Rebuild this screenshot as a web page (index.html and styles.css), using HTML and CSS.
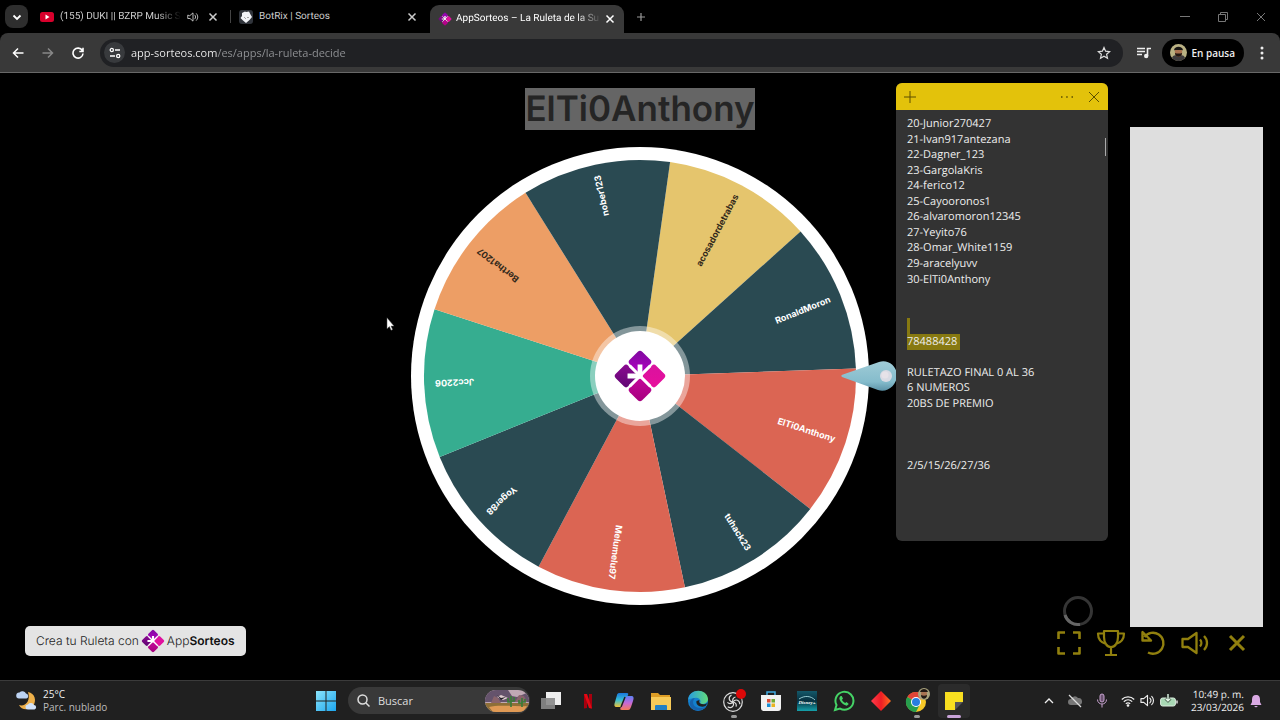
FILE: index.html
```html
<!DOCTYPE html>
<html lang="es">
<head>
<meta charset="utf-8">
<meta name="viewport" content="width=device-width, initial-scale=1">
<title>AppSorteos – La Ruleta de la Suerte</title>
<link rel="stylesheet" href="styles.css">
</head>
<body>
<svg class="defs" aria-hidden="true">
  <defs>
    <linearGradient id="gTop" x1="0" y1="0" x2="1" y2="1"><stop offset="0" stop-color="#7d0a9e"/><stop offset="1" stop-color="#b400c4"/></linearGradient>
    <linearGradient id="gRight" x1="0" y1="0" x2="1" y2="1"><stop offset="0" stop-color="#d9129f"/><stop offset="1" stop-color="#e80f9c"/></linearGradient>
    <linearGradient id="gBottom" x1="0" y1="0" x2="1" y2="1"><stop offset="0" stop-color="#c4089b"/><stop offset="1" stop-color="#a5007c"/></linearGradient>
    <linearGradient id="gLeft" x1="0" y1="0" x2="1" y2="1"><stop offset="0" stop-color="#8c0a92"/><stop offset="1" stop-color="#5f0672"/></linearGradient>
    <symbol id="logo" viewBox="0 0 52 52">
      <g transform="rotate(45 26 26)">
        <rect x="8" y="8" width="17" height="17" rx="3" fill="url(#gTop)"/>
        <rect x="27" y="8" width="17" height="17" rx="3" fill="url(#gRight)"/>
        <rect x="27" y="27" width="17" height="17" rx="3" fill="url(#gBottom)"/>
        <rect x="8" y="27" width="17" height="17" rx="3" fill="url(#gLeft)"/>
      </g>
      <path d="M26 26l-10-10M26 26l10-10M26 26l-10 10M26 26l10 10" stroke="#fff" stroke-width="2.800" fill="none"/>
      <path d="M26 28V15M28 26H14" stroke="#fff" stroke-width="4.600" fill="none"/>
    </symbol>
    <symbol id="close" viewBox="0 0 10 10"><path d="M1.500 1.500l7 7M8.500 1.500l-7 7" fill="none" stroke="currentColor" stroke-width="1.500"/></symbol>
    <symbol id="sound" viewBox="0 0 16 16"><path d="M1 6v4h3l4 3.500V2.500L4 6zM10.500 5.500c1.400 1.400 1.400 3.600 0 5M12.500 3.500c2.500 2.500 2.500 6.500 0 9" fill="none" stroke="currentColor" stroke-width="1.200" stroke-linejoin="round" stroke-linecap="round"/></symbol>
  </defs>
</svg>

<header class="tabs">
  <button class="tabs-menu" aria-label="Buscar pestañas"><svg width="12" height="12" viewBox="0 0 12 12"><path d="M2.500 4.500L6 8l3.500-3.500" fill="none" stroke="#fff" stroke-width="1.800"/></svg></button>
  <div class="tab">
    <svg width="14" height="14" viewBox="0 0 14 14"><rect y="2" width="14" height="10" rx="2.500" fill="#d8002c"/><path d="M5.500 4.500v5L9.500 7z" fill="#fff"/></svg>
    <span class="tab-title fade">(155) DUKI || BZRP Music Se</span>
    <button class="plain" aria-label="Silenciar pestaña"><svg width="12" height="12"><use href="#sound"/></svg></button>
    <button class="plain" aria-label="Cerrar pestaña"><svg width="10" height="10"><use href="#close"/></svg></button>
  </div>
  <div class="tab tab-divided">
    <svg width="14" height="14" viewBox="0 0 14 14"><rect width="14" height="14" rx="3" fill="#30343b"/><path d="M3 3l3-1.500L7 2l3-.5 1.500 3L13 7l-2.500 3L7 13l-3-2.500L1.500 8 3 6z" fill="#f2f4f8"/><path d="M5.500 7.500l1 1M8.500 7.500h1" stroke="#555" stroke-width="1"/></svg>
    <span class="tab-title">BotRix | Sorteos</span>
    <button class="plain" aria-label="Cerrar pestaña"><svg width="10" height="10"><use href="#close"/></svg></button>
  </div>
  <div class="tab tab-active">
    <svg width="14" height="14"><use href="#logo"/></svg>
    <span class="tab-title fade">AppSorteos – La Ruleta de la Su</span>
    <button class="plain" aria-label="Cerrar pestaña"><svg width="10" height="10"><use href="#close"/></svg></button>
  </div>
  <button class="plain tab-new" aria-label="Nueva pestaña"><svg width="10" height="10" viewBox="0 0 10 10"><path d="M5 1v8M1 5h8" stroke="#999" stroke-width="1.200"/></svg></button>
  <div class="window-buttons">
    <button class="plain" aria-label="Minimizar"><svg width="10" height="10" viewBox="0 0 10 10"><path d="M0 4.500h10" stroke="#777"/></svg></button>
    <button class="plain" aria-label="Restaurar"><svg width="10" height="10" viewBox="0 0 10 10"><path d="M.5 2.500h7v7h-7zM2.500 2V.5h7v7H8" fill="none" stroke="#777"/></svg></button>
    <button class="plain" aria-label="Cerrar"><svg width="10" height="10" viewBox="0 0 10 10"><path d="M1 1l8 8M9 1L1 9" stroke="#777"/></svg></button>
  </div>
</header>

<nav class="toolbar">
  <div class="nav-buttons">
    <button class="plain" aria-label="Atrás"><svg width="12" height="12" viewBox="0 0 12 12"><path d="M11.500 6H1.500M6 1.500L1.500 6 6 10.500" fill="none" stroke="#fff" stroke-width="1.500"/></svg></button>
    <button class="plain" aria-label="Adelante"><svg width="12" height="12" viewBox="0 0 12 12"><path d="M.5 6h10M6 1.500L10.500 6 6 10.500" fill="none" stroke="#888" stroke-width="1.500"/></svg></button>
    <button class="plain" aria-label="Recargar"><svg width="12" height="12" viewBox="0 0 12 12"><path d="M10.300 3.500A5 5 0 1 0 11 6.500M11 .8v3.700H7.300" fill="none" stroke="#fff" stroke-width="1.600"/></svg></button>
  </div>
  <div class="address">
    <button class="site-info" aria-label="Información del sitio"><svg width="12" height="12" viewBox="0 0 12 12"><g fill="none" stroke="#fff" stroke-width="1.300"><circle cx="2.800" cy="3" r="1.600"/><path d="M6 3h5M1 9h5"/><circle cx="9.200" cy="9" r="1.600"/></g></svg></button>
    <input class="url" type="text" aria-label="Dirección" value="app-sorteos.com/es/apps/la-ruleta-decide">
    <button class="plain" aria-label="Añadir a favoritos"><svg width="14" height="14" viewBox="0 0 14 14"><path d="M7 1.500l1.600 3.700 4 .4-3 2.700.9 4L7 10.200l-3.500 2.100.9-4-3-2.700 4-.4z" fill="none" stroke="#ddd" stroke-width="1.200"/></svg></button>
  </div>
  <button class="plain media" aria-label="Controles multimedia"><svg width="14" height="12" viewBox="0 0 14 12"><path d="M0 1.500h8M0 4.500h8M0 7.500h5M10.500 9V1.500H14" fill="none" stroke="#eee" stroke-width="1.600"/><circle cx="9.200" cy="9" r="2.200" fill="#eee"/></svg></button>
  <button class="profile">
    <svg width="17" height="17" viewBox="0 0 17 17"><circle cx="8.500" cy="8.500" r="8.500" fill="#b9b183"/><path d="M2 14c1-3 3-3 6.500-3s5.500 0 6.500 3a8.500 8.500 0 0 1-13 0z" fill="#3d3a3c"/><ellipse cx="8.500" cy="8" rx="3.700" ry="5" fill="#a9714f"/><path d="M4 6.500C4 1.500 13 1.500 13 6.500L12 6H5z" fill="#171412"/><path d="M5 9c2 .8 5 .8 7 0 0 5-7 5-7 0z" fill="#211713"/></svg>
    En pausa
  </button>
  <button class="plain more" aria-label="Menú"><svg width="4" height="14" viewBox="0 0 4 14"><g fill="#eee"><circle cx="2" cy="2" r="1.500"/><circle cx="2" cy="7" r="1.500"/><circle cx="2" cy="12" r="1.500"/></g></svg></button>
</nav>

<main class="stage">
  <h1 class="winner"><mark>ElTi0Anthony</mark></h1>
  <div class="wheel-box">
    <svg class="wheel" viewBox="-229 -229 458 458" role="img" aria-label="Ruleta">
      <circle r="229" fill="#fff"/>
      <g>
        <path d="M0 0L-73.900-203A216 216 0 0 1 73.900-203Z" fill="#e5c56d" transform="rotate(28)"/>
        <path d="M0 0L-73.900-203A216 216 0 0 1 73.900-203Z" fill="#2a4a52" transform="rotate(68)"/>
        <path d="M0 0L-73.900-203A216 216 0 0 1 73.900-203Z" fill="#db6553" transform="rotate(108)"/>
        <path d="M0 0L-73.900-203A216 216 0 0 1 73.900-203Z" fill="#2a4a52" transform="rotate(148)"/>
        <path d="M0 0L-73.900-203A216 216 0 0 1 73.900-203Z" fill="#db6553" transform="rotate(188)"/>
        <path d="M0 0L-73.900-203A216 216 0 0 1 73.900-203Z" fill="#2a4a52" transform="rotate(228)"/>
        <path d="M0 0L-73.900-203A216 216 0 0 1 73.900-203Z" fill="#36ad90" transform="rotate(268)"/>
        <path d="M0 0L-73.900-203A216 216 0 0 1 73.900-203Z" fill="#ed9e65" transform="rotate(308)"/>
        <path d="M0 0L-73.900-203A216 216 0 0 1 73.900-203Z" fill="#2a4a52" transform="rotate(348)"/>
      </g>
      <g class="names">
        <text class="dark" x="205" y="3" transform="rotate(-62)">acosadordetrabas</text>
        <text x="205" y="3" transform="rotate(-22)">RonaldMoron</text>
        <text x="205" y="3" transform="rotate(18)">ElTi0Anthony</text>
        <text x="205" y="3" transform="rotate(58)">tuhack23</text>
        <text x="205" y="3" transform="rotate(98)">Melumelu97</text>
        <text x="205" y="3" transform="rotate(138)">Yoger88</text>
        <text x="205" y="3" transform="rotate(178)">Jcc2206</text>
        <text class="dark" x="205" y="3" transform="rotate(218)">Bertha1207</text>
        <text x="205" y="3" transform="rotate(258)">nober123</text>
      </g>
      <circle r="50" fill="#fff" fill-opacity=".42"/>
      <circle r="45" fill="#fff"/>
      <use href="#logo" x="-27" y="-27" width="54" height="54"/>
    </svg>
    <svg class="pointer" width="60" height="34" viewBox="0 0 60 34">
      <defs><linearGradient id="gPin" x1="0" y1="0" x2="0" y2="1"><stop offset="0" stop-color="#9fcbd6"/><stop offset=".7" stop-color="#85bccc"/><stop offset="1" stop-color="#5c93a8"/></linearGradient></defs>
      <path d="M1 18c-1-1-1-2 1-2.500L38 3c8-3 17 3 18 12 0 12-10 19-19 16z" fill="url(#gPin)"/>
      <circle cx="45" cy="17" r="6" fill="#d9dbe4"/><circle cx="44" cy="16" r="3.500" fill="#e6e2e8"/>
    </svg>
  </div>

  <a class="brand" href="#">Crea tu Ruleta con <svg width="24" height="24"><use href="#logo"/></svg><span>App<b>Sorteos</b></span></a>

  <div class="panel"></div>
  <svg class="spinner" width="32" height="32" viewBox="0 0 32 32"><circle cx="16" cy="16" r="13.500" fill="none" stroke="#353535" stroke-width="3"/><path d="M3 20a13.500 13.500 0 0 0 15 9.400" fill="none" stroke="#666" stroke-width="3"/></svg>
  <div class="controls">
    <button aria-label="Pantalla completa"><svg width="24" height="24" viewBox="0 0 24 24"><path d="M1.500 8V1.500H8M16 1.500h6.500V8M22.500 16v6.500H16M8 22.500H1.500V16" stroke-width="2.600"/></svg></button>
    <button aria-label="Ganadores"><svg width="30" height="28" viewBox="0 0 30 28"><path d="M8 2h14v6c0 6-3 10-7 10S8 14 8 8zM8 4.500H2c0 6 3 9 8 10.500M22 4.500h6c0 6-3 9-8 10.500M15 18v7M9 26h12" stroke-width="2.200"/></svg></button>
    <button aria-label="Reiniciar"><svg width="26" height="26" viewBox="0 0 26 26"><path d="M4.500 7A10.500 10.500 0 1 1 8 22.500M2.500 2v8.500H11L2.500 2z" stroke-width="2.400"/></svg></button>
    <button aria-label="Sonido"><svg width="28" height="24" viewBox="0 0 28 24"><path d="M1.500 8v8H7l8.500 6V2L7 8zM19 8.500c1.800 2 1.800 5 0 7M23 5c4 4 4 10 0 14" stroke-width="2.300"/></svg></button>
    <button aria-label="Cerrar"><svg width="18" height="18" viewBox="0 0 18 18"><path d="M2 2l14 14M16 2L2 16" stroke-width="3"/></svg></button>
  </div>

  <svg class="cursor" width="9" height="14" viewBox="0 0 9 14"><path d="M1 .8v11l2.400-2.200 1.700 3.700 1.500-.7-1.600-3.500h3z" fill="#fff" stroke="#555" stroke-width=".5"/></svg>
</main>

<section class="note" aria-label="Nota rápida">
  <header class="note-bar">
    <button class="plain" aria-label="Nueva nota"><svg width="12" height="12" viewBox="0 0 12 12"><path d="M6 0v12M0 6h12" stroke="#5c4f00"/></svg></button>
    <button class="plain note-more" aria-label="Opciones"><svg width="14" height="4" viewBox="0 0 14 4"><path d="M1 2h1.500M6.200 2h1.500M11.500 2H13" stroke="#5c4f00" stroke-width="1.500"/></svg></button>
    <button class="plain" aria-label="Cerrar nota"><svg width="12" height="12" viewBox="0 0 12 12"><path d="M1 1l10 10M11 1L1 11" stroke="#5c4f00"/></svg></button>
  </header>
  <div class="note-body">
    <p>20-Junior270427</p>
    <p>21-Ivan917antezana</p>
    <p>22-Dagner_123</p>
    <p>23-GargolaKris</p>
    <p>24-ferico12</p>
    <p>25-Cayooronos1</p>
    <p>26-alvaromoron12345</p>
    <p>27-Yeyito76</p>
    <p>28-Omar_White1159</p>
    <p>29-aracelyuvv</p>
    <p>30-ElTi0Anthony</p>
    <p></p>
    <p></p>
    <p><mark>&nbsp;</mark></p>
    <p><mark>78488428&nbsp;</mark></p>
    <p></p>
    <p>RULETAZO FINAL 0 AL 36</p>
    <p>6 NUMEROS</p>
    <p>20BS DE PREMIO</p>
    <p></p>
    <p></p>
    <p></p>
    <p>2/5/15/26/27/36</p>
    <p></p>
    <p></p>
    <p></p>
    <p></p>
  </div>
  <i class="note-scroll"></i>
</section>

<footer class="taskbar">
  <button class="weather">
    <svg width="22" height="22" viewBox="0 0 22 22"><path d="M12 2c7 1 9 9 5 14S5 20 3 15c6 2 12-4 9-13z" fill="#eeb04a"/><path d="M3 8.500a3 3 0 0 1 .5-6 4 4 0 0 1 6.500 1 2.600 2.600 0 0 1 .5 5z" fill="#bcd2f2"/><path d="M12 19.500a2.500 2.500 0 0 1 0-5 3.500 3.500 0 0 1 6 .5 2.300 2.300 0 0 1 .5 4.500z" fill="#d2e2f8"/></svg>
    <span>25°C<small>Parc. nublado</small></span>
  </button>
  <div class="dock">
    <button class="plain" aria-label="Inicio"><svg width="20" height="20" viewBox="0 0 20 20"><defs><linearGradient id="gWin" x1="0" y1="0" x2="1" y2="1"><stop offset="0" stop-color="#8be4fb"/><stop offset="1" stop-color="#1ba5ee"/></linearGradient></defs><path d="M0 0h9.500v9.500H0zM10.500 0H20v9.500h-9.500zM0 10.500h9.500V20H0zM10.500 10.500H20V20h-9.500z" fill="url(#gWin)"/></svg></button>
    <label class="search">
      <svg width="13" height="13" viewBox="0 0 13 13"><circle cx="5.500" cy="5.500" r="4.500" fill="none" stroke="#ddd" stroke-width="1.500"/><path d="M9 9l3.500 3.500" stroke="#ddd" stroke-width="1.500"/></svg>
      <input type="search" placeholder="Buscar" aria-label="Buscar">
      <svg width="44" height="22" viewBox="0 0 44 22"><defs><clipPath id="scene"><rect width="44" height="22" rx="11"/></clipPath></defs><g clip-path="url(#scene)"><path d="M0 0h44v22H0z" fill="#c0a8b4"/><path d="M0 3l9-3h14l4 6 5 1 12-5v10H0z" fill="#65536c"/><path d="M12 7l4-2 7 3-5 2z" fill="#e0cdd0"/><path d="M6 13l3-7 4 2 3 5zM30 12l4-7 5 1 3 6z" fill="#89636b"/><path d="M0 13h44v9H0z" fill="#8e6f38"/><path d="M4 17c10-3 26 0 38-1l-4 6H8z" fill="#e09a55"/><path d="M26 17V6M23 8v4h3M29 7v4h-3M37 17V8M34 10v3h3M40 9v3h-3" stroke="#3c7a38" stroke-width="1.700" fill="none"/><path d="M12 5l4 3 5-1-5 3z" fill="#25202a"/></g></svg>
    </label>
    <div class="apps">
      <button aria-label="Vista de tareas"><svg width="20" height="20" viewBox="0 0 20 20"><path d="M5 1h15v13H5z" fill="#eee"/><path d="M0 7h14v11H0z" fill="#888" fill-opacity=".9"/></svg></button>
      <button aria-label="Netflix"><svg width="20" height="20" viewBox="0 0 20 20"><path d="M6 3h3v14l-3 .5zM11 3h3v14.500l-3-.5z" fill="#a8000e"/><path d="M6 3h3l5 14.500-3-.5z" fill="#e30914"/></svg></button>
      <button aria-label="Copilot"><svg width="20" height="20" viewBox="0 0 20 20"><defs><linearGradient id="gCoA" x1="0" y1="0" x2="0" y2="1"><stop offset="0" stop-color="#1977dd"/><stop offset=".5" stop-color="#36bfd5"/><stop offset="1" stop-color="#f0c336"/></linearGradient><linearGradient id="gCoB" x1="0" y1="0" x2="0" y2="1"><stop offset="0" stop-color="#5b81f4"/><stop offset=".5" stop-color="#c669d8"/><stop offset="1" stop-color="#f77b58"/></linearGradient></defs><path d="M5 2h8c1.500 0 1.500 1 1 2l-4 10c-1 2-2 2-4 2H3c-3 0-3-2-2-5l2-7c0-1 1-2 2-2z" fill="url(#gCoA)"/><path d="M14 5h3c3 0 3 2 2 5l-2 6c-1 2-1 3-3 3H8c-2 0-2-1-1.500-2L11 7c.8-1.500 1.500-2 3-2z" fill="url(#gCoB)"/><path d="M11 6L7 16" stroke="#202020" stroke-width="1.500"/></svg></button>
      <button aria-label="Explorador"><svg width="22" height="20" viewBox="0 0 22 20"><path d="M1 2h7l2 2h10v5H1z" fill="#dd9d25"/><path d="M1 6h20v13H1z" fill="#f7ca58"/><path d="M5 19v-4q0-1 1-1h10q1 0 1 1v4z" fill="#2380c4"/></svg></button>
      <button aria-label="Edge"><svg width="22" height="22" viewBox="0 0 22 22"><defs><linearGradient id="gEd" x1="0" y1="0" x2="1" y2="0"><stop offset="0" stop-color="#269be1"/><stop offset="1" stop-color="#62dc7c"/></linearGradient></defs><circle cx="11" cy="11" r="10" fill="#1380ce"/><path d="M1 10C2-2 20-2 21 9c0 5-7 6-8 4 2-3-2-6-5-5-4 0-6 1-7 2z" fill="url(#gEd)"/><path d="M8 8c-5 5 0 13 11 9-4 5-14 5-16-2-1-4 2-7 5-7z" fill="#1662ad"/><path d="M12.500 10c-1 2 0 5 6 4l2-1-2 3c-5 2-10-1-9-5z" fill="#202020"/></svg></button>
      <button class="open" aria-label="OBS"><svg width="24" height="24" viewBox="0 0 24 24"><circle cx="11" cy="13" r="9.300" fill="#222" stroke="#ddd" stroke-width="1.200"/><g fill="none" stroke="#ddd" stroke-width="1.200"><path id="blade" d="M11 13c-4.500-.5-5-5-1.500-7M11 13c-1-3 .5-4.500 2.500-5"/><use href="#blade" transform="rotate(120 11 13)"/><use href="#blade" transform="rotate(240 11 13)"/></g><circle cx="19" cy="5" r="5" fill="#dc0808"/></svg></button>
      <button aria-label="Microsoft Store"><svg width="20" height="20" viewBox="0 0 20 20"><path d="M6 5V1h8v4" fill="none" stroke="#3fa9df" stroke-width="1.500"/><path d="M0 4h20v13q0 3-3 3H3q-3 0-3-3z" fill="#f2f2f2"/><path d="M6 8h3.500v3.500H6z" fill="#dd4b34"/><path d="M10.500 8H14v3.500h-3.500z" fill="#6eaa34"/><path d="M6 12.500h3.500V16H6z" fill="#198fd4"/><path d="M10.500 12.500H14V16h-3.500z" fill="#eab421"/></svg></button>
      <button aria-label="Disney+"><svg width="20" height="20" viewBox="0 0 20 20"><defs><linearGradient id="gDis" x1="0" y1="0" x2="0" y2="1"><stop offset="0" stop-color="#14596a"/><stop offset=".5" stop-color="#07303f"/><stop offset="1" stop-color="#15a1ab"/></linearGradient></defs><path d="M0 0h20v20H0z" fill="url(#gDis)"/><path d="M2 8c6-4 12-3 16 1" fill="none" stroke="#b8ebf0" stroke-width=".8"/><text class="disney" x="10" y="13">Disney+</text></svg></button>
      <button aria-label="WhatsApp"><svg width="22" height="22" viewBox="0 0 22 22"><path d="M2 20l1.500-5A9 9 0 1 1 7 18.600z" fill="#202020" stroke="#45d366" stroke-width="2"/><path d="M7.500 6L6.300 8c.5 4 4 7 7.500 7.700l2-1.700-2.300-2-1.300 1C10.500 12 9.500 11 9 9.700l1-1.200L8.700 6z" fill="#45d366"/></svg></button>
      <button aria-label="AnyDesk"><svg width="20" height="20" viewBox="0 0 20 20"><defs><linearGradient id="gDia"><stop offset="0" stop-color="#ff3d4d"/><stop offset=".5" stop-color="#ed1c24"/><stop offset="1" stop-color="#ff7020"/></linearGradient></defs><path d="M10 0l10 10-10 10L0 10z" fill="url(#gDia)"/></svg></button>
      <button class="open" aria-label="Chrome"><svg width="26" height="26" viewBox="0 0 26 26"><circle cx="12" cy="14" r="10" fill="#f7c928"/><path d="M12 14L3.300 9A10 10 0 0 1 20.700 9z" fill="#e04438"/><path d="M12 14L3.300 9A10 10 0 0 0 12 24l4-8z" fill="#269e4d"/><circle cx="12" cy="14" r="5" fill="#fff"/><circle cx="12" cy="14" r="4" fill="#287de0"/><circle cx="20" cy="6" r="6" fill="#aaa47e"/><ellipse cx="20" cy="6" rx="3" ry="4" fill="#a87352"/><path d="M16 4c1-4 7-4 8 0M17 7c2 1 4 1 6 0 0 5-6 5-6 0" fill="#211915"/></svg></button>
      <button class="open current" aria-label="Notas rápidas"><svg width="18" height="18" viewBox="0 0 18 18"><path d="M0 0h18v10h-8v8H0z" fill="#f9df20"/><path d="M10 18v-8h8z" fill="#56565a"/></svg></button>
    </div>
  </div>
  <div class="tray">
    <button class="plain" aria-label="Iconos ocultos"><svg width="10" height="8" viewBox="0 0 10 8"><path d="M1 6l4-4 4 4" fill="none" stroke="#eee" stroke-width="1.300"/></svg></button>
    <button class="plain" aria-label="OneDrive"><svg width="16" height="14" viewBox="0 0 16 14"><path d="M4 11a3 3 0 0 1 0-6 4 4 0 0 1 7-1 3.500 3.500 0 0 1 1 7z" fill="#777"/><path d="M2 1l12 12" stroke="#ddd" stroke-width="1.300"/></svg></button>
    <button class="plain" aria-label="Micrófono"><svg width="12" height="16" viewBox="0 0 12 16"><rect x="4" y="1" width="4" height="8" rx="2" fill="#6d5473" stroke="#c8a3d0"/><path d="M1.500 6.500c0 6 9 6 9 0M6 11v3.500" fill="none" stroke="#c8a3d0"/></svg></button>
    <button class="plain quick" aria-label="Red, sonido y batería">
      <svg width="14" height="14" viewBox="0 0 14 14"><path d="M.8 5.500c3.500-3.500 9-3.500 12.400 0M2.800 7.700c2.500-2.400 6-2.400 8.400 0M4.800 9.800c1.400-1.300 3-1.300 4.400 0" fill="none" stroke="#eee" stroke-width="1.200"/><circle cx="7" cy="11.500" r="1.300" fill="#eee"/></svg>
      <svg class="light" width="15" height="15"><use href="#sound"/></svg>
      <svg width="18" height="14" viewBox="0 0 18 14"><rect x=".6" y="4" width="14.800" height="8" rx="2" fill="#a8d8b4" stroke="#ddeee0"/><path d="M17 6.500v3" stroke="#ddd" stroke-width="1.500"/><path d="M8 0v6.500M5.500 4.500L8 7l2.500-2.500" fill="none" stroke="#1c3022" stroke-width="2.600"/><path d="M8 0v6.500M5.500 4.500L8 7l2.500-2.500" fill="none" stroke="#e4f6e8" stroke-width="1.400"/></svg>
    </button>
    <time class="clock" datetime="2026-03-23T22:49">10:49 p. m.<br>23/03/2026</time>
    <button class="plain" aria-label="Notificaciones"><svg width="12" height="14" viewBox="0 0 12 14"><path d="M6 1c-3 0-4 2-4 4.500V8L.5 11h11L10 8V5.500C10 3 9 1 6 1zM4 12h4l-2 1.500z" fill="#d9a9e3"/></svg></button>
  </div>
</footer>
</body>
</html>
```

FILE: styles.css
```css
* { box-sizing: border-box; }

body {
  margin: 0;
  min-height: 100vh;
  display: flex;
  flex-direction: column;
  position: relative;
  overflow: hidden;
  background: #000;
  color: #eee;
  font: 11px/16px "Open Sans", "Noto Sans", sans-serif;
  text-rendering: geometricPrecision;
}

button, input {
  margin: 0;
  padding: 0;
  border: 0;
  background: none;
  color: inherit;
  font: inherit;
}

button { display: flex; align-items: center; justify-content: center; }
svg { display: block; flex: none; }
p { margin: 0; }
mark { color: inherit; }

.defs { position: absolute; width: 0; height: 0; }

/* Tab strip */
.tabs {
  display: flex;
  align-items: center;
  height: 33px;
  padding: 0 14px 0 5px;
  font-family: Roboto, "Open Sans", sans-serif;
  font-size: 10px;
}

.tabs-menu {
  width: 23px;
  height: 23px;
  margin-right: 4px;
  border-radius: 8px;
  background: #2e2e2e;
}

.tab {
  display: flex;
  align-items: center;
  gap: 6px;
  flex: 0 1 199px;
  min-width: 0;
  height: 28px;
  padding: 0 13px 0 8px;
  color: #ccc;
}

.tab-divided { position: relative; }
.tab-divided::before {
  content: "";
  position: absolute;
  left: -1px;
  width: 1px;
  height: 13px;
  background: #444;
}

.tab-title { flex: 1; min-width: 0; overflow: hidden; white-space: nowrap; }
.fade { mask-image: linear-gradient(to right, #000 calc(100% - 24px), transparent); }
.tab .plain + .plain { margin-left: 3px; }

.tab-active {
  align-self: flex-end;
  flex-basis: 194px;
  padding-right: 9px;
  gap: 4px;
  border-radius: 9px 9px 0 0;
  background: #393939;
  color: #fff;
}

.tab-new { margin-left: 12px; }
.window-buttons { display: flex; gap: 28px; margin-left: auto; }

/* Toolbar */
.toolbar {
  display: flex;
  align-items: center;
  height: 40px;
  padding: 0 16px 0 12px;
  border-bottom: 1px solid #686868;
  border-radius: 8px 8px 0 0;
  background: #393939;
}

.nav-buttons { display: flex; gap: 18px; margin-right: 16px; }

.address {
  display: flex;
  align-items: center;
  flex: 1;
  height: 28px;
  padding: 0 12px 0 4px;
  border-radius: 14px;
  background: #202124;
}

.site-info { width: 21px; height: 21px; margin-right: 6px; border-radius: 50%; background: #383a3d; }

.url {
  flex: 1;
  min-width: 0;
  background: linear-gradient(to right, #f4f4f4 86px, #929497 86px);
  background-clip: text;
  color: transparent;
}

.media { margin: 0 11px 0 14px; }
.profile {
  gap: 4px;
  height: 28px;
  padding: 0 9px 0 8px;
  border-radius: 14px;
  background: #000;
  font-size: 10px;
  font-weight: 600;
}
.more { margin-left: 16px; }

/* Wheel page */
.stage {
  position: relative;
  flex: 1;
  display: flex;
  flex-direction: column;
  align-items: center;
  gap: 16px;
  padding: 14px 24px;
}

.winner {
  margin: 0;
  color: #252525;
  font: 600 35px/44px Inter, sans-serif;
}
.winner mark { background: #656565; }

.wheel-box { position: relative; width: 458px; max-width: 100%; }
.wheel { width: 100%; height: auto; }
.names { fill: #fff; font: bold 9px Inter, sans-serif; text-anchor: end; }
.names .dark { fill: #33291b; }
.pointer { position: absolute; right: -32px; top: calc(50% - 17px); }

.brand {
  position: absolute;
  left: 25px;
  bottom: 24px;
  display: flex;
  align-items: center;
  gap: 2px;
  height: 30px;
  padding: 0 11px;
  border-radius: 5px;
  background: #e4e4e4;
  color: #222;
  font: 300 12px/16px Inter, sans-serif;
  text-decoration: none;
}
.brand b { color: #111; font-weight: 600; }

.panel {
  position: absolute;
  top: 54px;
  right: 17px;
  bottom: 53px;
  width: 133px;
  background: #dedede;
}

.spinner { position: absolute; right: 186px; bottom: 53px; }

.controls { position: absolute; right: 22px; bottom: 22px; display: flex; }
.controls button { width: 42px; height: 30px; }
.controls svg { fill: none; stroke: #91800e; stroke-linejoin: round; }

.cursor { position: absolute; left: 386px; top: 244px; }

/* Sticky note window */
.note {
  position: absolute;
  top: 83px;
  right: 172px;
  width: 212px;
  border-radius: 6px;
  overflow: hidden;
  background: #333;
}

.note-bar {
  display: flex;
  align-items: center;
  height: 27px;
  padding: 0 8px;
  background: #e3c20b;
}
.note-more { margin: 0 14px 0 auto; }

.note-body {
  display: grid;
  grid-template-rows: repeat(27, 1fr);
  height: 431px;
  padding: 6px 10px 5px 11px;
}
.note-body p { min-height: 0; white-space: nowrap; }
.note-body mark { display: inline-block; background: #877911; }

.note-scroll {
  position: absolute;
  top: 55px;
  right: 2px;
  width: 1px;
  height: 18px;
  background: #aaa;
}

/* Taskbar */
.taskbar {
  display: grid;
  grid-template-columns: 1fr auto 1fr;
  align-items: center;
  height: 40px;
  padding: 0 16px;
  border-top: 1px solid #3b3b3b;
  background: #202020;
  font-size: 10px;
  line-height: 13px;
}

.weather { justify-self: start; gap: 5px; text-align: left; }
.weather small { display: block; color: #bbb; font-size: 10px; }

.dock { display: flex; align-items: center; margin-left: 2px; }
.dock > .plain { width: 28px; height: 28px; }

.search {
  display: flex;
  align-items: center;
  gap: 8px;
  width: 182px;
  height: 27px;
  margin: 0 5px 0 8px;
  padding: 0 1px 0 9px;
  border-radius: 14px;
  background: #393939;
  font-size: 11px;
}
.search input { flex: 1; min-width: 0; }
.search input::placeholder { color: #ddd; opacity: 1; }

.apps { display: flex; justify-content: space-between; width: 435px; }
.apps button { position: relative; width: 32px; height: 34px; border-radius: 4px; }
.apps .current { background: #2b2b2b; }
.apps .open::after {
  content: "";
  position: absolute;
  left: calc(50% - 3px);
  bottom: 0;
  width: 6px;
  height: 3px;
  border-radius: 2px;
  background: #999;
}
.apps .current::after { left: calc(50% - 7px); width: 14px; background: #c8a3d8; }
.disney { fill: #fff; font: italic bold 5px "Liberation Serif", serif; text-anchor: middle; }

.tray { display: flex; align-items: center; justify-content: flex-end; gap: 13px; padding-right: 2px; }
.quick { gap: 5px; }
.light { color: #eee; }
.clock { text-align: right; white-space: nowrap; }
.clock + .plain { margin-left: -7px; }
```
